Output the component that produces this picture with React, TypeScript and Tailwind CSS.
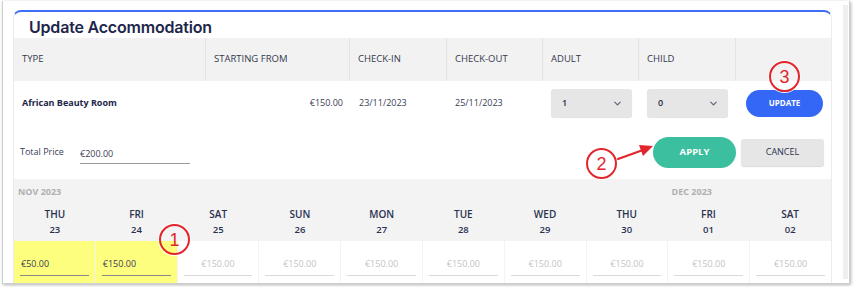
import { ChevronDown } from 'lucide-react';

const columns = ['TYPE', 'STARTING FROM', 'CHECK-IN', 'CHECK-OUT', 'ADULT', 'CHILD', ''];

const days = [
  { day: 'THU', date: '23', price: '€50.00', set: true },
  { day: 'FRI', date: '24', price: '€150.00', set: true },
  { day: 'SAT', date: '25', price: '€150.00' },
  { day: 'SUN', date: '26', price: '€150.00' },
  { day: 'MON', date: '27', price: '€150.00' },
  { day: 'TUE', date: '28', price: '€150.00' },
  { day: 'WED', date: '29', price: '€150.00' },
  { day: 'THU', date: '30', price: '€150.00' },
  { day: 'FRI', date: '01', price: '€150.00' },
  { day: 'SAT', date: '02', price: '€150.00' },
];

function Marker({ n, className }: { n: string; className: string }) {
  return (
    <div
      className={`absolute w-[31px] h-[31px] rounded-full border-2 border-[#e3262c] shadow-[0_0_0_1px_rgba(255,255,255,0.9)] flex items-center justify-center text-[#e3262c] text-[18px] font-['Liberation_Sans',sans-serif] leading-none ${className}`}
    >
      {n}
    </div>
  );
}

function Select({ value }: { value: string }) {
  return (
    <div className="w-[81px] h-[28px] bg-[#e6e6e6] rounded-[3px] shadow-[0_1px_1px_rgba(0,0,0,0.12)] flex items-center justify-between pl-[11px] pr-[9px] text-[9px] font-semibold text-[#1f2a48]">
      <span>{value}</span>
      <ChevronDown size={11} strokeWidth={2.2} className="text-[#555c70]" />
    </div>
  );
}

export default function App() {
  return (
    <div className="w-[855px] h-[287px] bg-white pt-[1px] pl-[2px] overflow-hidden font-['Open_Sans',sans-serif]">
      <div className="relative w-[848px] h-[283px] border-l border-r border-b border-[#cfcfcf] shadow-[1px_1px_3px_rgba(0,0,0,0.3)] flex overflow-hidden">
        <div className="w-[840px] pl-[10px] pt-[9px]">
          <div className="w-[819px] border-t-2 border-[#3d6ef5] rounded-t-[8px] border-x border-x-[#ececec] bg-white">
            <div className="h-[26px] pl-[15px] pt-[3px] flex items-center text-[16px] leading-none font-semibold text-[#1d2649] font-['Inter',sans-serif] tracking-[-0.2px]">
              Update Accommodation
            </div>

            <div className="grid grid-cols-[192px_144px_97px_96px_96px_97px_97px] h-[43px] bg-[#f2f2f2]">
              {columns.map((c, i) => (
                <div
                  key={i}
                  className={`flex items-center px-[8px] text-[9.5px] font-medium text-[#333a4d] ${i < 6 ? 'border-r border-[#e4e4e4]' : ''}`}
                >
                  {c}
                </div>
              ))}
            </div>

            <div className="grid grid-cols-[192px_144px_97px_96px_96px_97px_97px] h-[44px] items-center text-[9px] text-[#3a4055]">
              <div className="pl-[8px] font-bold text-[#1d2649]">African Beauty Room</div>
              <div className="text-right pr-[7px]">€150.00</div>
              <div className="pl-[9px]">23/11/2023</div>
              <div className="pl-[8px]">25/11/2023</div>
              <div className="pl-[8px]">
                <Select value="1" />
              </div>
              <div className="pl-[8px]">
                <Select value="0" />
              </div>
              <div className="pl-[10px]">
                <button className="w-[77px] h-[27px] rounded-full bg-[#3467f6] text-white text-[8px] font-bold">
                  UPDATE
                </button>
              </div>
            </div>

            <div className="h-[54px] flex items-center pl-[6px] pr-[7px] text-[9px] text-[#3a4055]">
              <span className="w-[60px]">Total Price</span>
              <div className="w-[110px] h-[20px] mt-[4px] border-b border-[#9a9a9a] flex items-center">€200.00</div>
              <div className="ml-auto flex items-center gap-[5px]">
                <button className="w-[83px] h-[31px] rounded-full bg-[#3cbf9e] text-white text-[9.5px] font-bold">
                  APPLY
                </button>
                <button className="w-[83px] h-[27px] rounded-[3px] bg-[#e6e6e6] shadow-[0_1px_1px_rgba(0,0,0,0.15)] text-[#2c3350] text-[9px] font-medium">
                  CANCEL
                </button>
              </div>
            </div>

            <div className="bg-[#f3f3f3] h-[62px] grid grid-cols-10 grid-rows-[26px_18px_15px]">
              <div className="col-start-1 col-span-2 pl-[4px] flex items-center text-[9px] font-bold text-[#b0b0b0]">NOV 2023</div>
              <div className="col-start-9 col-span-2 pl-[4px] flex items-center text-[9px] font-bold text-[#b0b0b0]">DEC 2023</div>
              {days.map((d, i) => (
                <div key={'d' + i} className="row-start-2 flex items-center justify-center text-[10px] font-semibold text-[#2a3150]">
                  {d.day}
                </div>
              ))}
              {days.map((d, i) => (
                <div key={'n' + i} className="row-start-3 flex items-center justify-center text-[9.5px] font-semibold text-[#2a3150]">
                  {d.date}
                </div>
              ))}
            </div>

            <div className="grid grid-cols-10 h-[42px] bg-[#f3f3f3] gap-x-px">
              {days.map((d, i) => (
                <div key={i} className={`px-[6px] pt-[11px] ${d.set ? 'bg-[#fdfd7e]' : 'bg-white'}`}>
                  <div
                    className={`h-[24px] flex items-center border-b text-[9px] ${
                      d.set ? 'border-[#888] text-[#3a4055] pl-[1px]' : 'border-[#dadada] text-[#c4c4c4] justify-center'
                    }`}
                  >
                    {d.price}
                  </div>
                </div>
              ))}
            </div>
          </div>
        </div>
        <div className="w-[5px] bg-[#efefef] mt-[4px] mb-[4px]" />

        <Marker n="3" className="left-[766px] top-[60px]" />
        <Marker n="2" className="left-[583px] top-[147px]" />
        <Marker n="1" className="left-[156px] top-[223px]" />
        <svg className="absolute left-[610px] top-[138px]" width="48" height="30" viewBox="0 0 48 30">
          <line x1="5" y1="20" x2="30" y2="11" stroke="#e3262c" strokeWidth="2.2" strokeLinecap="round" />
          <polygon points="40,7 26,6 30,17" fill="#e3262c" />
        </svg>
      </div>
    </div>
  );
}
